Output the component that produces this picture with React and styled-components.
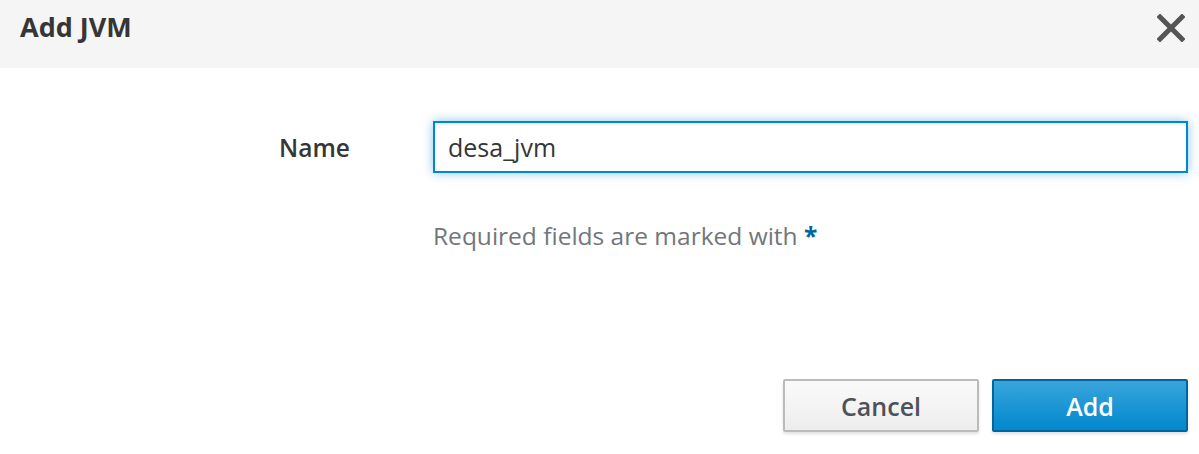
import styled, { createGlobalStyle } from "styled-components";

const GlobalStyle = createGlobalStyle`
  html, body {
    margin: 0;
    padding: 0;
    background: #fff;
    font-family: "Open Sans", "Liberation Sans", sans-serif;
  }
`;

const Modal = styled.div`
  width: 1199px;
  height: 454px;
  display: flex;
  flex-direction: column;
  background: #fff;
`;

const Header = styled.div`
  height: 68px;
  background-color: #f5f5f5;
  display: flex;
  align-items: center;
  justify-content: space-between;
  padding: 0 14px 0 20px;
  box-sizing: border-box;
`;

const Title = styled.h4`
  margin: 0 0 16px;
  font-size: 27px;
  font-weight: 700;
  color: #363636;
`;

const Close = styled.button`
  border: none;
  background: transparent;
  padding: 0;
  margin-bottom: 12px;
  display: flex;
  cursor: pointer;
`;

const Body = styled.div`
  flex: 1;
  padding: 53px 11px 0 0;
  display: flex;
  flex-direction: column;
`;

const Row = styled.div`
  display: grid;
  grid-template-columns: 350px 1fr;
  column-gap: 83px;
  align-items: center;
`;

const Label = styled.label`
  text-align: right;
  font-size: 24.5px;
  font-weight: 600;
  color: #363636;
`;

const Input = styled.input`
  height: 52px;
  box-sizing: border-box;
  border: 2px solid #0088ce;
  padding: 0 13px;
  font-family: inherit;
  font-size: 25px;
  color: #363636;
  outline: none;
  box-shadow: 0 0 10px rgba(0, 136, 206, 0.45), inset 0 2px 2px rgba(3, 3, 3, 0.08);
`;

const Help = styled.p`
  margin: 46px 0 0;
  font-size: 24.5px;
  color: #72767b;
`;

const Star = styled.span`
  color: #00659c;
  font-weight: 700;
`;

const Footer = styled.div`
  display: flex;
  justify-content: flex-end;
  gap: 13px;
  margin-bottom: 22px;
`;

const Button = styled.button`
  width: 196px;
  height: 53px;
  box-sizing: border-box;
  font-family: inherit;
  font-size: 25px;
  font-weight: 600;
  border-radius: 2px;
  cursor: pointer;
  color: ${({ primary }) => (primary ? "#fff" : "#4d5258")};
  border: 2px solid ${({ primary }) => (primary ? "#00659c" : "#bbbbbb")};
  background: ${({ primary }) =>
    primary
      ? "linear-gradient(to bottom, #39a5dc 0%, #0088ce 100%)"
      : "linear-gradient(to bottom, #fafafa 0%, #ededed 100%)"};
  box-shadow: 0 2px 3px rgba(3, 3, 3, 0.12);
`;

const Spacer = styled.div`
  flex: 1;
`;

export default function App() {
  return (
    <>
      <GlobalStyle />
      <Modal>
        <Header>
          <Title>Add JVM</Title>
          <Close aria-label="Close">
            <svg width="28" height="28" viewBox="0 0 28 28">
              <path
                d="M3 3 L25 25 M25 3 L3 25"
                stroke="#555555"
                strokeWidth="5"
                strokeLinecap="square"
              />
            </svg>
          </Close>
        </Header>
        <Body>
          <Row>
            <Label>Name</Label>
            <Input defaultValue="desa_jvm" />
            <span />
            <Help>
              Required fields are marked with <Star>*</Star>
            </Help>
          </Row>
          <Spacer />
          <Footer>
            <Button>Cancel</Button>
            <Button primary>Add</Button>
          </Footer>
        </Body>
      </Modal>
    </>
  );
}
